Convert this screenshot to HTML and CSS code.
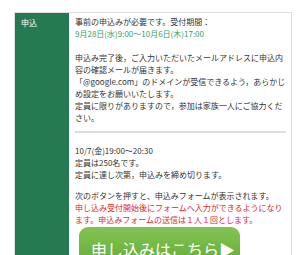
FILE: index.html
```html
<!DOCTYPE html>
<html lang="ja">
<head>
    <meta charset="UTF-8">
    <meta name="viewport" content="width=device-width, initial-scale=1.0">
    <title>申込</title>
    <link rel="stylesheet" href="styles.css">
</head>
<body>

    <!-- ======= Entry Table ======= -->
    <table class="entry-table">
        <tr>
            <th class="entry-label">申込</th>
            <td class="entry-body">
                <p class="para">事前の申込みが必要です。受付期間：<br>
                    <span class="period">9月28日(水)9:00～10月6日(木)17:00</span></p>

                <p class="para">申込み完了後，ご入力いただいたメールアドレスに申込内<br>容の確認メールが届きます。<br>
                    「@google.com」のドメインが受信できるよう，あらかじ<br>め設定をお願いいたします。<br>
                    定員に限りがありますので，参加は家族一人にご協力くだ<br>さい。</p>

                <hr class="divider">

                <p class="para para-tight">10/7(金)19:00～20:30<br>
                    定員は250名です。<br>
                    定員に達し次第，申込みを締め切ります。</p>

                <p class="para">次のボタンを押すと、申込みフォームが表示されます。<br>
                    <span class="notice">申し込み受付開始後にフォームへ入力ができるようになり<br>ます。申込みフォームの送信は１人１回とします。</span></p>

                <a class="entry-button" href="#">申し込みはこちら▶</a>
            </td>
        </tr>
    </table>

</body>
</html>
```

FILE: styles.css
```css
body {
    font-family: "Noto Sans CJK JP", "Noto Sans", sans-serif;
    margin: 0;
    padding: 12px 13px 0 14px;
    background-color: #ffffff;
    color: #333333;
}

.entry-table {
    width: 278px;
    border-collapse: collapse;
    border: 1px solid #dddddd;
    font-size: 8px;
    line-height: 12px;
}

.entry-label {
    width: 44px;
    padding: 4px 6px;
    background-color: #267a52;
    color: white;
    font-weight: normal;
    text-align: left;
    vertical-align: top;
}

.entry-body {
    padding: 3px 5px 0 6px;
    vertical-align: top;
    white-space: nowrap;
}

.para {
    margin: 0 0 12px 0;
}

.para-tight {
    margin-bottom: 9px;
}

.period {
    color: #36a063;
}

.notice {
    color: #e5242c;
}

.divider {
    width: 211px;
    height: 2px;
    margin: -5px 0 12px 0;
    border: none;
    background-color: #dddddd;
}

.entry-button {
    display: block;
    width: 149px;
    margin: -11px 0 0 4px;
    padding: 11px 0 14px 12px;
    border-radius: 9px;
    background: linear-gradient(#82c352, #5fa834);
    color: white;
    font-size: 16px;
    line-height: 22px;
    text-decoration: none;
}
```
